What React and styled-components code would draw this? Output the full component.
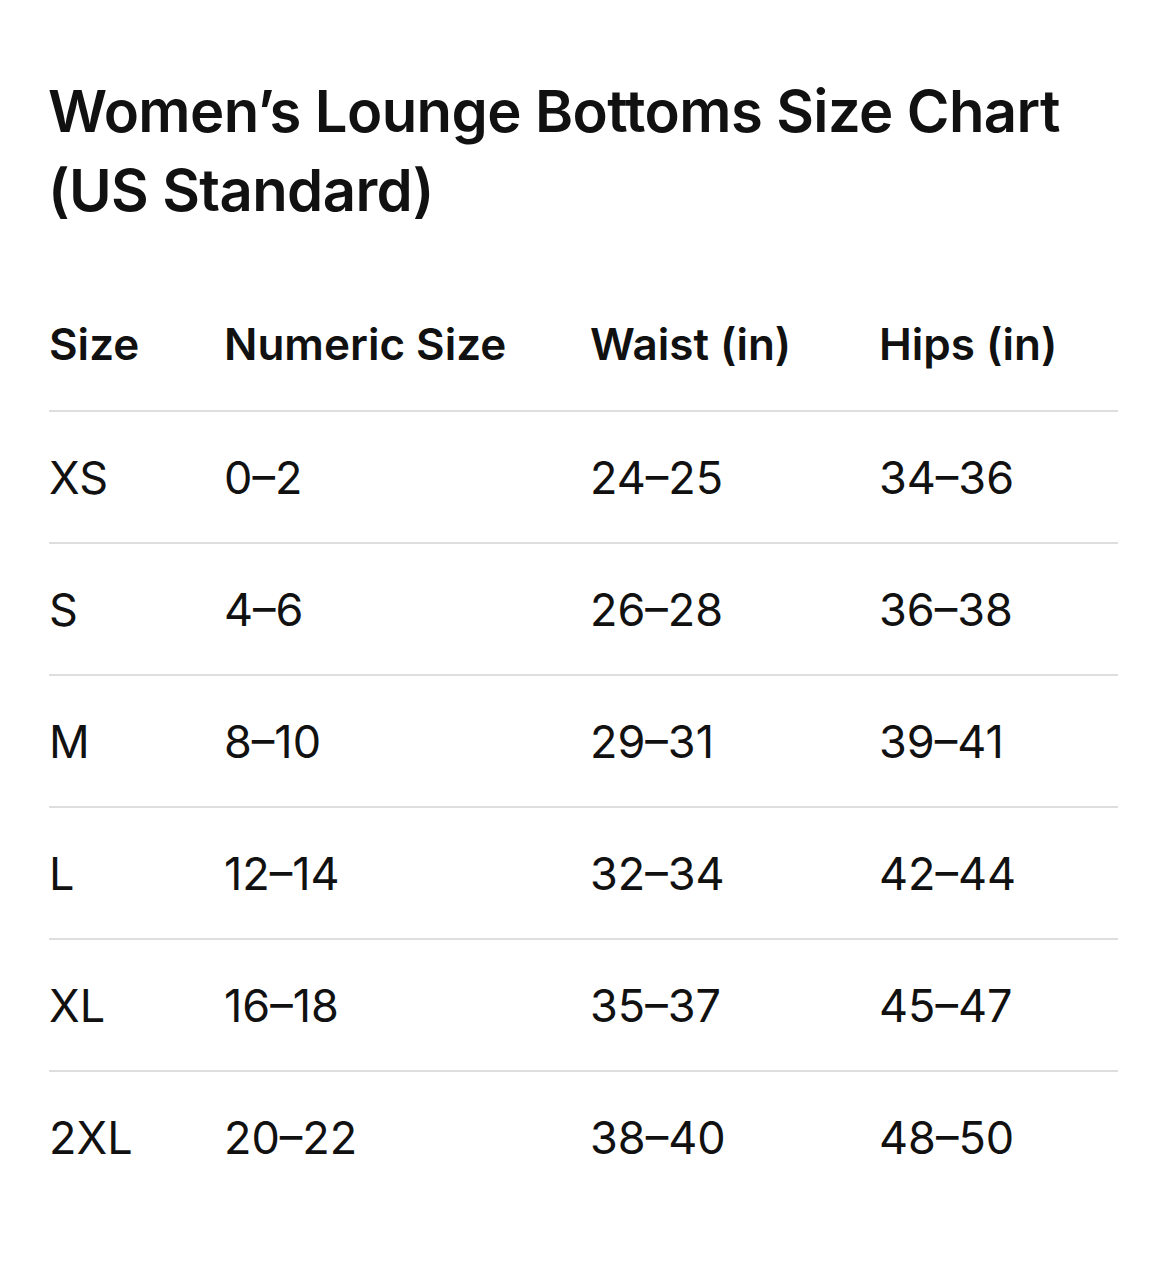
import React from 'react';
import styled, { createGlobalStyle } from 'styled-components';

const GlobalStyle = createGlobalStyle`
  body {
    margin: 0;
    background: #ffffff;
    font-family: Inter, "Noto Sans", sans-serif;
    color: #111111;
  }
`;

const Page = styled.div`
  padding: 72px 52px 60px 49px;
`;

const Title = styled.h1`
  margin: 0 0 48px -1px;
  font-size: 58px;
  line-height: 79px;
  font-weight: 600;
  letter-spacing: -0.6px;
`;

const Table = styled.div`
  display: grid;
  grid-template-columns: 175px 366px 289px 1fr;
`;

const Cell = styled.div`
  height: 132px;
  display: flex;
  align-items: center;
  font-size: ${(p) => (p.$head ? '44px' : '45px')};
  font-weight: ${(p) => (p.$head ? 600 : 400)};
  border-top: ${(p) => (p.$head ? 'none' : '2px solid #dedede')};
  box-sizing: border-box;
  white-space: nowrap;
`;

const headers = ['Size', 'Numeric Size', 'Waist (in)', 'Hips (in)'];

const rows = [
  ['XS', '0–2', '24–25', '34–36'],
  ['S', '4–6', '26–28', '36–38'],
  ['M', '8–10', '29–31', '39–41'],
  ['L', '12–14', '32–34', '42–44'],
  ['XL', '16–18', '35–37', '45–47'],
  ['2XL', '20–22', '38–40', '48–50'],
];

const App = () => (
  <>
    <GlobalStyle />
    <Page>
      <Title>
        Women’s Lounge Bottoms Size Chart
        <br />
        (US Standard)
      </Title>
      <Table>
        {headers.map((h) => (
          <Cell key={h} $head>
            {h}
          </Cell>
        ))}
        {rows.map((row) =>
          row.map((value, i) => <Cell key={row[0] + i}>{value}</Cell>)
        )}
      </Table>
    </Page>
  </>
);

export default App;
